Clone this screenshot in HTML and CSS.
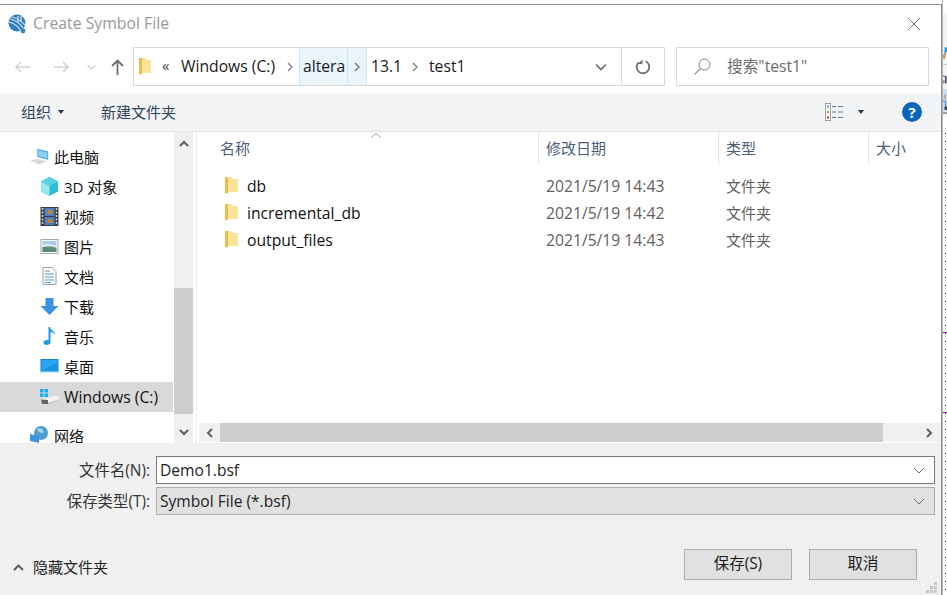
FILE: index.html
```html
<!DOCTYPE html>
<html lang="zh-CN">
<head>
<meta charset="utf-8">
<title>Create Symbol File</title>
<link rel="stylesheet" href="styles.css">
</head>
<body>
<div class="screen">
  <div class="dialog">
    <header class="titlebar">
      <svg class="app-icon" width="19" height="20" viewBox="0 0 19 20"><circle cx="9" cy="9" r="8.500" fill="#2f7fb8"/><path d="M1 8c4 1 9 4 12 9M2 5c4 1 10 4 13 9M4 3c4 1 9 4 13 8" stroke="#cfe3f0" stroke-width="1.100" fill="none"/><path d="M10 2v6M13 2v6" stroke="#e6f0f6" stroke-width="1.200"/><circle cx="15" cy="17" r="2.400" fill="#3a86bb"/></svg>
      <span class="title">Create Symbol File</span>
      <svg class="close" width="14" height="14" viewBox="0 0 14 14"><path d="M1 1l12 12M13 1L1 13" stroke="#7d7d7d" stroke-width="1" fill="none"/></svg>
    </header>

    <div class="navbar">
      <div class="nav-buttons">
        <svg class="nav-back" width="16" height="12" viewBox="0 0 16 12"><path d="M15.500 6H1M6 1L1 6l5 5" stroke="#d3d3d3" stroke-width="1.600" fill="none"/></svg>
        <svg class="nav-forward" width="16" height="12" viewBox="0 0 16 12"><path d="M.5 6H15M10 1l5 5-5 5" stroke="#d3d3d3" stroke-width="1.600" fill="none"/></svg>
        <svg class="nav-down" width="9" height="6" viewBox="0 0 9 6"><path d="M.5 1l4 4 4-4" stroke="#d3d3d3" stroke-width="1.500" fill="none"/></svg>
        <svg class="nav-up" width="13" height="16" viewBox="0 0 13 16"><path d="M6.500 16V1.500M1 7l5.500-5.500L12 7" stroke="#6d6d6d" stroke-width="1.800" fill="none"/></svg>
      </div>
      <div class="address">
        <svg class="addr-folder" width="12" height="17" viewBox="0 0 12 17"><path d="M0 0h6l2 2h4v13H3l-1 2-2-1z" fill="#fbe39a"/><path d="M0 0h3v16H0z" fill="#eabf4c"/></svg>
        <span class="addr-more">«</span>
        <span class="crumb crumb-win">Windows (C:)</span>
        <svg class="chev" width="6" height="10" viewBox="0 0 6 10"><path d="M1 1l4 4-4 4" stroke="#8a8a8a" stroke-width="1.500" fill="none"/></svg>
        <span class="crumb-hot">
          <span class="hot-label">altera</span>
          <span class="hot-arrow"><svg width="6" height="10" viewBox="0 0 6 10"><path d="M1 1l4 4-4 4" stroke="#7a7a7a" stroke-width="1.500" fill="none"/></svg></span>
        </span>
        <span class="crumb crumb-ver">13.1</span>
        <svg class="chev" width="6" height="10" viewBox="0 0 6 10"><path d="M1 1l4 4-4 4" stroke="#8a8a8a" stroke-width="1.500" fill="none"/></svg>
        <span class="crumb crumb-last">test1</span>
        <svg class="addr-drop" width="12" height="8" viewBox="0 0 12 8"><path d="M1 1.500l5 5 5-5" stroke="#6d6d6d" stroke-width="1.700" fill="none"/></svg>
        <span class="addr-refresh"><svg width="16" height="16" viewBox="0 0 16 16"><path d="M10.500 2.200A6.300 6.300 0 1 1 3.600 3.400" stroke="#707070" stroke-width="1.800" fill="none"/><path d="M7.500 0v5H2.800z" fill="#707070" transform="rotate(8 5 3)"/></svg></span>
      </div>
      <div class="search">
        <svg width="17" height="17" viewBox="0 0 17 17"><circle cx="10.500" cy="6.500" r="5.500" stroke="#7d7d7d" stroke-width="1" fill="none"/><path d="M6.500 10.500L.7 16.300" stroke="#8a8a8a" stroke-width="1.200"/></svg>
        <span class="search-text">搜索"test1"</span>
      </div>
    </div>

    <div class="toolbar">
      <span class="tool tool-org">组织</span>
      <span class="caret"></span>
      <span class="tool tool-new">新建文件夹</span>
      <svg class="view-icon" width="18" height="18" viewBox="0 0 18 18"><rect x=".5" y=".5" width="5" height="17" fill="#fff" stroke="#a0a0a0"/><rect x="2" y="2.500" width="2" height="2" fill="#4a8ac0"/><rect x="2" y="8" width="2" height="2" fill="#b09030"/><rect x="2" y="13.500" width="2" height="2" fill="#b04020"/><path d="M7 3.500h4M13 3.500h5M7 9h4M13 9h5M7 14.500h4M13 14.500h5" stroke="#6d7480"/></svg>
      <span class="caret caret-view"></span>
      <span class="help">?</span>
    </div>

    <main class="body">
      <nav class="sidebar">
        <div class="tree-item tree-root">
          <svg width="21" height="17" viewBox="0 0 21 17"><path d="M8 0l12 3v9L8 9z" fill="#4da6e8"/><path d="M9 1.500l10 2.500v6.500L9 8z" fill="#8fd0f5"/><path d="M0 13l9-2 10 3-9 3z" fill="#d6d6d6"/></svg>
          <span>此电脑</span>
        </div>
        <div class="tree-item">
          <svg width="19" height="19" viewBox="0 0 19 19"><path d="M9.500 0L18 4.500v10L9.500 19 1 14.500v-10z" fill="#2bbdd2"/><path d="M1 4.500L9.500 9v10L1 14.500z" fill="#9ae6ee"/><path d="M9.500 0L18 4.500 9.500 9 1 4.500z" fill="#56d2e2"/></svg>
          <span>3D 对象</span>
        </div>
        <div class="tree-item">
          <svg width="18" height="19" viewBox="0 0 18 19"><rect width="18" height="19" fill="#3b3b3b"/><rect x="4" y="1" width="10" height="8" fill="#4d7fc4"/><rect x="4" y="10" width="10" height="8" fill="#4d7fc4"/><rect x="7" y="3" width="5" height="4" fill="#b98a2c"/><rect x="7" y="12" width="5" height="4" fill="#b98a2c"/><path d="M2 1v17M16 1v17" stroke="#cfcfcf" stroke-width="1.600" stroke-dasharray="2 1.500"/></svg>
          <span>视频</span>
        </div>
        <div class="tree-item">
          <svg width="18" height="15" viewBox="0 0 18 15"><rect x=".5" y=".5" width="17" height="14" fill="#fff" stroke="#a8a8a8"/><rect x="2" y="2" width="14" height="11" fill="#a9cdec"/><path d="M2 8c4-2 9-1 14 1v4H2z" fill="#5c8a80"/><path d="M2 6c4-1 8-1 14 1v1c-5-1-10-1-14 0z" fill="#e8eef0"/></svg>
          <span>图片</span>
        </div>
        <div class="tree-item">
          <svg width="14" height="18" viewBox="0 0 14 18"><path d="M.5.5h9l4 4v13H.5z" fill="#fbfbfb" stroke="#a0a0a0"/><path d="M2.500 4h5M2.500 7h9M2.500 10h9M2.500 13h9M2.500 15.500h6" stroke="#5b9bd5"/></svg>
          <span>文档</span>
        </div>
        <div class="tree-item">
          <svg width="18" height="17" viewBox="0 0 18 17"><path d="M5 0h8v8h5l-9 9-9-9h5z" fill="#3d8fe0"/></svg>
          <span>下载</span>
        </div>
        <div class="tree-item">
          <svg width="12" height="18" viewBox="0 0 12 18"><path d="M5 0h1.500c.5 3 5 4 5 8-1-2-3-3-4.500-3v10.500C7 17 5 18 3 18s-3-1-3-2.500S1.500 13 3.500 13c.6 0 1 .1 1.500.3z" fill="#1e9be8"/></svg>
          <span>音乐</span>
        </div>
        <div class="tree-item">
          <svg width="18" height="14" viewBox="0 0 18 14"><rect width="18" height="14" fill="#0f86dc"/><path d="M1 1h16v11H1z" fill="#2aa4f2"/><path d="M1 12L17 3v9z" fill="#1b93e6"/><rect y="12.500" x="0" width="18" height="1.500" fill="#d9eefb"/></svg>
          <span>桌面</span>
        </div>
        <div class="tree-item tree-selected">
          <svg width="19" height="15" viewBox="0 0 19 15"><path d="M1 10.500L13 7h6v4L8 15H2z" fill="#f4f4f4"/><path d="M1 10.500L8 11v4H2z" fill="#5f6666"/><path d="M8 14L19 10.500V11L8 15z" fill="#a6acac"/><path d="M0 0h3.500v3.500H0zM4.500 0H8v3.500H4.500zM0 4.500h3.500V8H0zM4.500 4.500H8V8H4.500z" fill="#12b0f0"/></svg>
          <span class="latin">Windows (C:)</span>
        </div>
        <div class="tree-item tree-root tree-net">
          <svg width="19" height="18" viewBox="0 0 19 18"><circle cx="11" cy="7" r="7" fill="#4d9fd0"/><path d="M7 3c3-2 6 0 7 3-2 2-5 1-7-3z" fill="#a8d4ea"/><path d="M0 8l9 2v7l-9-2z" fill="#3f93dc"/></svg>
          <span>网络</span>
        </div>
      </nav>

      <div class="vscroll">
        <svg class="vs-up" width="10" height="7" viewBox="0 0 10 7"><path d="M1 6l4-4 4 4" stroke="#606060" stroke-width="2" fill="none"/></svg>
        <div class="vs-thumb"></div>
        <svg class="vs-down" width="10" height="7" viewBox="0 0 10 7"><path d="M1 1l4 4 4-4" stroke="#606060" stroke-width="2" fill="none"/></svg>
      </div>

      <section class="files">
        <div class="file-area">
          <div class="file-head">
            <svg class="sort" width="10" height="5" viewBox="0 0 10 5"><path d="M.5 4.500L5 .5l4.500 4" stroke="#9a9a9a" fill="none"/></svg>
            <div class="col col-name"><span>名称</span></div>
            <div class="col col-date"><span>修改日期</span></div>
            <div class="col col-type"><span>类型</span></div>
            <div class="col col-size"><span>大小</span></div>
          </div>
          <div class="rows">
            <div class="row">
              <div class="cell-name"><svg width="13" height="17" viewBox="0 0 13 17"><path d="M0 0h6l2 2h5v13H3l-1 2-2-1z" fill="#fbe39a"/><path d="M0 0h3v16H0z" fill="#eabf4c"/></svg><span>db</span></div>
              <div class="cell-date">2021/5/19 14:43</div>
              <div class="cell-type">文件夹</div>
            </div>
            <div class="row">
              <div class="cell-name"><svg width="13" height="17" viewBox="0 0 13 17"><path d="M0 0h6l2 2h5v13H3l-1 2-2-1z" fill="#fbe39a"/><path d="M0 0h3v16H0z" fill="#eabf4c"/></svg><span>incremental_db</span></div>
              <div class="cell-date">2021/5/19 14:42</div>
              <div class="cell-type">文件夹</div>
            </div>
            <div class="row">
              <div class="cell-name"><svg width="13" height="17" viewBox="0 0 13 17"><path d="M0 0h6l2 2h5v13H3l-1 2-2-1z" fill="#fbe39a"/><path d="M0 0h3v16H0z" fill="#eabf4c"/></svg><span>output_files</span></div>
              <div class="cell-date">2021/5/19 14:43</div>
              <div class="cell-type">文件夹</div>
            </div>
          </div>
        </div>
        <div class="hscroll">
          <span class="hs-btn"><svg width="7" height="10" viewBox="0 0 7 10"><path d="M6 1L2 5l4 4" stroke="#606060" stroke-width="2" fill="none"/></svg></span>
          <div class="hs-thumb"></div>
          <span class="hs-btn hs-right"><svg width="7" height="10" viewBox="0 0 7 10"><path d="M1 1l4 4-4 4" stroke="#606060" stroke-width="2" fill="none"/></svg></span>
        </div>
      </section>
    </main>

    <footer class="footer">
      <div class="fields">
        <label class="field-label">文件名(N):</label>
        <div class="combo combo-edit"><span>Demo1.bsf</span><svg width="12" height="7" viewBox="0 0 12 7"><path d="M1 1l5 5 5-5" stroke="#707070" fill="none"/></svg></div>
        <label class="field-label">保存类型(T):</label>
        <div class="combo combo-select"><span>Symbol File (*.bsf)</span><svg width="12" height="7" viewBox="0 0 12 7"><path d="M1 1l5 5 5-5" stroke="#707070" fill="none"/></svg></div>
      </div>
      <div class="actions">
        <svg class="hide-chev" width="11" height="7" viewBox="0 0 11 7"><path d="M1 6l4.500-4.500L10 6" stroke="#555" stroke-width="1.800" fill="none"/></svg>
        <span class="hide-text">隐藏文件夹</span>
        <button class="btn btn-save" type="button">保存(S)</button>
        <button class="btn" type="button">取消</button>
      </div>
      <svg class="grip" width="12" height="12" viewBox="0 0 12 12"><path d="M8 0h3v3H8zM4 4h3v3H4zM8 4h3v3H8zM0 8h3v3H0zM4 8h3v3H4zM8 8h3v3H8z" fill="#c4c4c4"/></svg>
    </footer>
  </div>

  <aside class="backdrop">
    <svg class="bd-tools" width="5" height="130" viewBox="0 0 5 130">
      <rect width="5" height="130" fill="#f4f4f4"/>
      <rect y="64" width="5" height="1" fill="#c4c4c4"/>
      <rect x="2" y="43" width="3" height="6" fill="#1f95dc"/>
      <rect x="2" y="49" width="1" height="4" fill="#1a1a1a"/>
      <rect y="52" width="3" height="5" fill="#e08a35"/>
      <path d="M0 79h3v9M1 84v4M4 79v9" stroke="#33264a" fill="none"/>
      <rect y="95" width="5" height="28" fill="#c9dcef"/>
      <rect x="2" y="102" width="1" height="5" fill="#d8402a"/>
      <path d="M0 110h3v8" stroke="#2f5fa8" fill="none"/>
      <rect x="2" y="117" width="3" height="4" fill="#26344a"/>
      <rect y="124" width="5" height="2" fill="#8a8a8a"/>
    </svg>
    <div class="bd-grid">
      <i class="bd-wire bd-wire-a"></i>
      <i class="bd-wire bd-wire-b"></i>
    </div>
  </aside>
</div>
</body>
</html>
```

FILE: styles.css
```css
* { box-sizing: border-box; }
html, body { margin: 0; padding: 0; }
body {
  width: 947px;
  height: 595px;
  overflow: hidden;
  background: #fff;
  font-family: "Open Sans", "Noto Sans CJK SC", sans-serif;
  font-size: 15px;
  color: #1a1a1a;
}
.screen { display: flex; width: 947px; height: 595px; }
.latin { font-size: 15.7px; padding-top: 2px; }

.dialog {
  width: 942px;
  height: 591px;
  margin-top: 4px;
  border-top: 1px solid #8f8f8f;
  border-right: 1px solid #8f8f8f;
  background: #fff;
  display: flex;
  flex-direction: column;
  flex: none;
}

/* Title */
.titlebar { height: 42px; display: flex; align-items: center; padding: 0 20px 4px 8px; flex: none; }
.app-icon { margin-right: 6px; }
.title { color: #9a9a9a; font-size: 15.8px; padding-bottom: 2px; }
.close { margin-left: auto; }

/* Navigation */
.navbar { height: 39px; display: flex; align-items: stretch; flex: none; margin-bottom: 7px; }
.nav-buttons { width: 133px; display: flex; align-items: center; flex: none; }
.nav-back { margin-left: 15px; }
.nav-forward { margin-left: 22px; }
.nav-down { margin-left: 18px; }
.nav-up { margin-left: 15px; margin-top: 1px; }
.address {
  width: 532px;
  border: 1px solid #d9d9d9;
  display: flex;
  align-items: center;
  flex: none;
  color: #1a1a1a;
  font-size: 15.7px;
}
.addr-folder { margin-left: 5px; }
.addr-more { margin-left: 11px; width: 19px; font-size: 15px; color: #444; margin-top: -4px; }
.crumb { padding-bottom: 2px; }
.crumb-win { width: 106px; white-space: nowrap; }
.crumb-hot {
  display: flex;
  align-self: stretch;
  background: #e9f4fd;
  width: 68px;
  margin-left: 6px;
  flex: none;
}
.hot-label {
  width: 49px;
  display: flex;
  align-items: center;
  padding: 0 0 2px 3px;
  border-left: 1px solid #cce4f7;
  border-right: 1px solid #cce4f7;
}
.hot-arrow {
  width: 19px;
  display: flex;
  align-items: center;
  justify-content: center;
  border-right: 1px solid #cce4f7;
}
.crumb-ver { margin-left: 4px; width: 41px; }
.crumb-last { margin-left: 11px; }
.addr-drop { margin-left: auto; margin-right: 14px; }
.addr-refresh {
  width: 43px;
  align-self: stretch;
  border-left: 1px solid #d9d9d9;
  display: flex;
  align-items: center;
  justify-content: center;
  flex: none;
}
.search {
  width: 253px;
  margin-left: 11px;
  border: 1px solid #d9d9d9;
  display: flex;
  align-items: center;
  padding-left: 17px;
  flex: none;
}
.search-text { margin-left: 16px; color: #6d6d6d; font-size: 15.7px; padding-bottom: 2px; }

/* Toolbar */
.toolbar {
  height: 39px;
  background: #f3f4f6;
  border-bottom: 1px solid #e6e6e6;
  display: flex;
  align-items: center;
  flex: none;
  padding-left: 21px;
  color: #30445c;
}
.tool { padding-bottom: 2px; }
.caret {
  width: 0;
  height: 0;
  border-left: 3.500px solid transparent;
  border-right: 3.500px solid transparent;
  border-top: 4px solid #26344a;
  margin-left: 7px;
}
.tool-new { margin-left: 37px; }
.view-icon { margin-left: 649px; }
.caret-view { margin-left: 15px; }
.help {
  width: 20px;
  height: 20px;
  border-radius: 50%;
  background: #0a66bd;
  color: #fff;
  font-weight: 700;
  font-size: 15px;
  line-height: 20px;
  text-align: center;
  margin-left: 38px;
}

/* Body */
.body { height: 311px; display: flex; flex: none; overflow: hidden; }
.sidebar { width: 174px; flex: none; padding-top: 10px; overflow: hidden; }
.tree-item { height: 30px; display: flex; align-items: center; padding: 0 0 2px 40px; gap: 5px; white-space: nowrap; color: #111; flex: none; }
.tree-item svg { flex: none; width: 19px; }
.tree-root { padding-left: 30px; }
.tree-selected { background: #d9d9d9; width: 173px; }
.tree-net { margin-top: 9px; }

.vscroll {
  width: 19px;
  flex: none;
  background: #f0f0f0;
  display: flex;
  flex-direction: column;
  align-items: center;
  padding-top: 8px;
}
.vs-thumb { width: 19px; height: 126px; background: #cdcdcd; margin-top: 141px; }
.vs-down { margin-top: 15px; }

.files {
  flex: 1;
  margin-left: 3px;
  border-left: 1px solid #efefef;
  padding-left: 2px;
  display: flex;
  flex-direction: column;
  min-width: 0;
}
.file-area { flex: 1; min-height: 0; }
.file-head { height: 32px; display: flex; position: relative; color: #4c607a; }
.sort { position: absolute; left: 172px; top: 1px; }
.col { display: flex; align-items: center; padding: 0 0 2px 7px; border-right: 1px solid #e5e5e5; }
.col-name { width: 340px; padding-left: 21px; }
.col-date { width: 180px; }
.col-type { width: 150px; }
.col-size { border-right: 0; }
.rows { padding-top: 8px; }
.row { height: 27px; display: flex; align-items: center; }
.cell-name { width: 339px; display: flex; align-items: center; padding-left: 26px; gap: 9px; color: #111; font-size: 15.7px; }
.cell-date, .cell-type { padding-left: 8px; color: #5f5f5f; }
.cell-date { width: 180px; font-size: 15.7px; }
.hscroll { height: 19px; background: #f0f0f0; display: flex; align-items: center; margin-bottom: 1px; flex: none; }
.hs-btn { width: 21px; height: 19px; display: flex; align-items: center; justify-content: center; flex: none; }
.hs-thumb { width: 663px; height: 19px; background: #cdcdcd; flex: none; }
.hs-right { width: 58px; padding-left: 35px; }

/* Footer */
.footer {
  flex: 1;
  background: #f0f0f0;
  padding-top: 13px;
  position: relative;
  display: flex;
  flex-direction: column;
}
.fields {
  display: grid;
  grid-template-columns: 150px 779px;
  grid-auto-rows: 28px;
  row-gap: 3px;
  column-gap: 6px;
  align-items: center;
}
.field-label { text-align: right; color: #333; white-space: nowrap; padding-bottom: 2px; font-size: 15.4px; }
.combo {
  height: 28px;
  display: flex;
  align-items: center;
  justify-content: space-between;
  padding: 0 9px 0 3px;
  border: 1px solid #7a7a7a;
  color: #222;
  font-size: 15.6px;
}
.combo-edit { background: #fff; }
.combo-select { background: #e1e1e1; border-color: #adadad; }
.actions { display: flex; align-items: center; margin-top: 34px; padding-left: 13px; }
.hide-chev { flex: none; margin-top: 6px; }
.hide-text { margin-left: 9px; margin-top: 4px; color: #222; }
.btn {
  width: 108px;
  height: 31px;
  background: #e1e1e1;
  border: 1px solid #adadad;
  border-radius: 0;
  font: inherit;
  font-size: 15.4px;
  color: #1a1a1a;
  padding: 0 0 4px;
}
.btn-save { margin-left: 576px; margin-right: 17px; }
.grip { position: absolute; right: 3px; bottom: 1px; }

/* Background app behind the dialog */
.backdrop {
  flex: 1;
  display: flex;
  flex-direction: column;
  background: #fff;
  overflow: hidden;
  border-left: 1px solid #b5b5b5;
}
.bd-tools { display: block; flex: none; width: 100%; }
.bd-grid {
  flex: 1;
  position: relative;
  background-color: #fff;
  background-image: linear-gradient(#1a1a1a 1px, transparent 1px);
  background-repeat: repeat-y;
  background-size: 1px 8px;
  background-position: 2px 3px;
}
.bd-wire { position: absolute; left: 0; right: 0; height: 1px; background: #8a1a9a; display: block; }
.bd-wire-a { top: 202px; }
.bd-wire-b { top: 282px; }
```
